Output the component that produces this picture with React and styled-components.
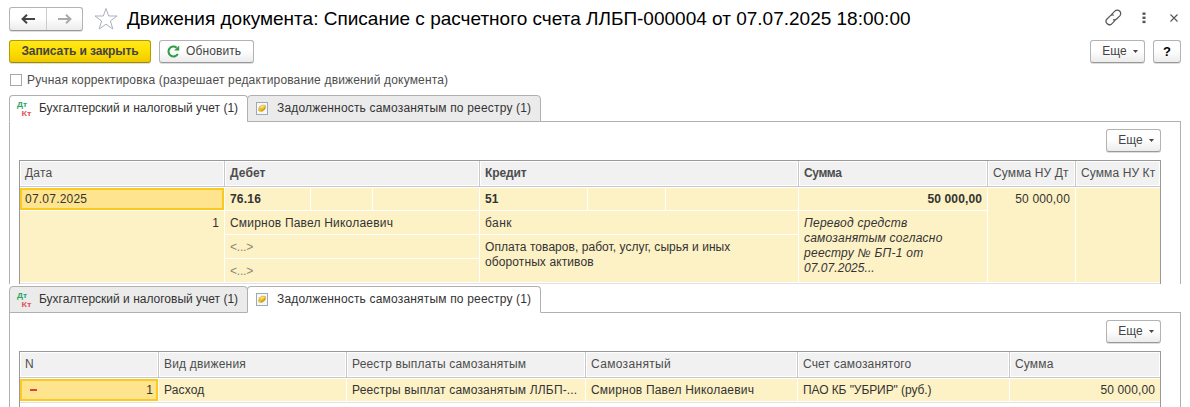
import React from 'react';
import styled, { createGlobalStyle, css } from 'styled-components';

const GlobalStyle = createGlobalStyle`
  * { box-sizing: border-box; }
  html, body { margin: 0; background: #fff; }
  body {
    font-family: "Liberation Sans", Arial, sans-serif;
    font-size: 12px;
    line-height: 15px;
    color: #333;
    overflow: hidden;
  }
`;

const Window = styled.main`
  width: 1190px;
  height: 407px;
  padding: 6px 9px 0;
  overflow: hidden;
  display: flex;
  flex-direction: column;
`;

const TitleBar = styled.header`
  height: 25px;
  display: flex;
  align-items: center;
`;

const Text = styled.span`
  white-space: nowrap;
  letter-spacing: ${(p) => p.$ls || 0}px;
`;

const raised = css`
  border: 1px solid #b3b3b3;
  border-bottom-color: #999;
  border-radius: 3px;
  background: linear-gradient(#fff 0%, #fff 45%, #ececec 100%);
  box-shadow: 0 1px 0 #dedede;
`;

const NavButtons = styled.div`
  ${raised}
  width: 74px;
  height: 24px;
  display: grid;
  grid-template-columns: 36px 36px;
`;

const NavButton = styled.button`
  border: 0;
  padding: 0;
  background: none;
  display: grid;
  place-items: center;
  & + & { border-left: 1px solid #ccc; }
`;

const Star = styled.svg`
  margin: 0 9px 0 11px;
  flex: none;
`;

const Title = styled.h1`
  margin: 0;
  flex: 1;
  font-size: 19px;
  line-height: 24px;
  font-weight: 400;
  color: #000;
  white-space: nowrap;
`;

const WindowTools = styled.div`
  width: 73px;
  display: flex;
  align-items: center;
  padding-bottom: 2px;
  margin-right: 3px;
`;

const Kebab = styled.svg`
  margin: 0 24px 0 20px;
`;

const CommandBar = styled.div`
  display: flex;
  gap: 8px;
  margin-top: 9px;
  height: 23px;
`;

const Button = styled.button`
  ${raised}
  width: ${(p) => p.$w}px;
  height: 23px;
  padding: 0 0 1px;
  display: flex;
  align-items: center;
  justify-content: center;
  gap: ${(p) => p.$gap || 0}px;
  font: 12px/15px "Liberation Sans", Arial, sans-serif;
  color: #444;
  ${(p) => p.$primary && css`
    border-color: #b39b00;
    border-bottom-color: #a08a00;
    background: linear-gradient(#ffe81f, #ffe000 45%, #edca00);
    font-weight: 700;
  `}
  ${(p) => p.$help && css`
    font-weight: 700;
    font-size: 13px;
    color: #000;
  `}
  ${(p) => p.$start && css`
    justify-content: flex-start;
    padding-left: 7px;
  `}
`;

const MoreText = styled(Text)`
  padding-left: 5px;
`;

const Spacer = styled.div`
  flex: 1;
  margin-right: -8px;
`;

const CheckRow = styled.label`
  height: 15px;
  margin: 10px 0 7px 1px;
  display: flex;
  align-items: center;
  gap: 5px;
  color: #4d4d4d;
`;

const CheckBox = styled.span`
  width: 12px;
  height: 12px;
  margin-bottom: 1px;
  border: 1px solid #a6a6a6;
  background: #fff;
`;

const Tabs = styled.div`
  display: flex;
  height: 27px;
  flex: none;
  margin-bottom: -1px;
  position: relative;
`;

const Tab = styled.div`
  width: ${(p) => p.$w}px;
  height: 27px;
  border: 1px solid #b0b0b0;
  border-radius: 4px 4px 0 0;
  border-bottom-color: ${(p) => (p.$active ? '#fff' : '#b0b0b0')};
  background: ${(p) => (p.$active ? '#fff' : '#ebebeb')};
  ${(p) => p.$joined && 'margin-left: -1px;'}
  display: flex;
  align-items: center;
  padding: 0 0 1px ${(p) => p.$pad}px;
  gap: ${(p) => p.$gap}px;
  color: #333;
`;

const Panel = styled.section`
  width: 1172px;
  height: ${(p) => p.$h}px;
  flex: none;
  border: 1px solid #b0b0b0;
  border-bottom: 0;
  padding: 7px 19px 0 9px;
  overflow: hidden;
`;

const PanelBar = styled.div`
  display: flex;
  justify-content: flex-end;
  height: 31px;
`;

const Table = styled.div`
  width: 1142px;
  height: 200px;
  border: 1px solid #999;
  border-bottom: 0;
`;

const HeadRow = styled.div`
  display: grid;
  grid-template-columns: ${(p) => p.$cols};
  column-gap: 1px;
  height: 26px;
  background: #c8c8c8;
  border-bottom: 1px solid #c8c8c8;
`;

const HeadCell = styled.div`
  background: #f1f1f1;
  border: 1px solid #fff;
  padding: 4px 0 0 4px;
  color: #4d4d4d;
  font-weight: ${(p) => (p.$bold ? 700 : 400)};
  overflow: hidden;
`;

const Body = styled.div`
  display: grid;
  grid-template-columns: ${(p) => p.$cols};
  grid-template-rows: ${(p) => p.$rows};
  gap: 1px;
  padding: 1px 0;
  border-bottom: 1px solid #e2e2e2;
`;

const Cell = styled.div`
  grid-column: ${(p) => p.$c};
  grid-row: ${(p) => p.$r};
  background: #fdf1c6;
  padding: ${(p) => (p.$detail ? 5 : 4)}px 5px 0;
  white-space: nowrap;
  overflow: hidden;
  text-align: ${(p) => (p.$right ? 'right' : 'left')};
  font-weight: ${(p) => (p.$bold ? 700 : 400)};
  font-style: ${(p) => (p.$italic ? 'italic' : 'normal')};
  ${(p) => p.$muted && 'color: #8a8678;'}
  ${(p) => p.$selected && css`
    background: #ffe48f;
    border: 2px solid #fcc91f;
    padding: 2px 3px 0;
  `}
`;

const SplitCell = styled.div`
  grid-column: ${(p) => p.$c};
  display: grid;
  grid-template-columns: ${(p) => p.$cols};
  gap: 1px;
`;

const MarkedCell = styled(Cell)`
  display: flex;
  justify-content: space-between;
`;

const Minus = styled.span`
  width: 7px;
  height: 2px;
  margin: 6px 0 0 5px;
  background: #e0413a;
`;

const Gap = styled.div`
  height: 2px;
  flex: none;
`;

const Arrow = ({ right }) => (
  <svg width="14" height="12" viewBox="0 0 14 12" fill="none" stroke={right ? '#aaa' : '#444'} strokeWidth="2">
    <path d={right ? 'M0 6H12M8 1.8L12.4 6L8 10.2' : 'M14 6H2M6 1.8L1.6 6L6 10.2'} />
  </svg>
);

const More = () => (
  <Button $w={55} $gap={6}>
    <MoreText>Еще</MoreText>
    <svg width="5" height="3" viewBox="0 0 5 3"><path d="M0 0H5L2.5 3Z" fill="#444" /></svg>
  </Button>
);

const Glyph = styled.text`
  font: 700 8px "Liberation Sans", Arial, sans-serif;
`;

const DtKt = () => (
  <svg width="17" height="17" viewBox="0 0 17 17">
    <Glyph x="1" y="7" fill="#2aa566" textLength="10" lengthAdjust="spacingAndGlyphs">Дт</Glyph>
    <Glyph x="5.5" y="15.5" fill="#e25555" textLength="10" lengthAdjust="spacingAndGlyphs">Кт</Glyph>
  </svg>
);

const CoinIcon = () => (
  <svg width="12" height="13" viewBox="0 0 12 13">
    <rect x="0.5" y="0.5" width="11" height="12" fill="#f5f8fb" stroke="#9ba9ba" />
    <path d="M3 4.6L6.2 2.7L9.8 3L9.5 7.2L6.5 9.8L3.5 9.8L2 8.2Z" fill="#e5bd35" />
    <path d="M4 5L6.6 3.6L8.6 4L7 5.6L4.6 6.2Z" fill="#f8e27d" />
    <path d="M5 8.8L8 7.5L9.4 5" stroke="#c3951c" fill="none" />
  </svg>
);

const TabStrip = ({ active }) => (
  <Tabs>
    <Tab $w={239} $pad={6} $gap={6} $active={active === 0}>
      <DtKt /><Text>Бухгалтерский и налоговый учет (1)</Text>
    </Tab>
    <Tab $w={294} $pad={8} $gap={9} $joined $active={active === 1}>
      <CoinIcon /><Text $ls={0.18}>Задолженность самозанятым по реестру (1)</Text>
    </Tab>
  </Tabs>
);

const COLS1 = '204px 254px 318px 188px 87px 84px';
const COLS2 = '138px 187px 238px 211px 211px 150px';

export default function App() {
  return (
    <Window>
      <GlobalStyle />
      <TitleBar>
        <NavButtons>
          <NavButton><Arrow /></NavButton>
          <NavButton><Arrow right /></NavButton>
        </NavButtons>
        <Star width="24" height="24" viewBox="0 0 24 24" fill="none" stroke="#a9b0b8" strokeWidth="1">
          <path d="M12 1.5L14.7 9H23L16.4 14L18.8 22L12 17.2L5.2 22L7.6 14L1 9H9.3Z" />
        </Star>
        <Title>Движения документа: Списание с расчетного счета ЛЛБП-000004 от 07.07.2025 18:00:00</Title>
        <WindowTools>
          <svg width="17" height="17" viewBox="0 0 17 17" fill="none" stroke="#555" strokeWidth="1.2">
            <path d="M6.4 5.6L9.8 2.2A3.2 3.2 0 0 1 14.8 6.8L11.6 10A3.2 3.2 0 0 1 8 10.6M10.4 11.2L7 14.6A3.2 3.2 0 0 1 2 10L5.2 6.8A3.2 3.2 0 0 1 8.8 6.2" />
          </svg>
          <Kebab width="4" height="12" viewBox="0 0 4 12" fill="#555">
            <rect x="0.5" y="0.5" width="3" height="2.4" /><rect x="0.5" y="4.6" width="3" height="2.4" /><rect x="0.5" y="8.7" width="3" height="2.4" />
          </Kebab>
          <svg width="8" height="8" viewBox="0 0 8 8" stroke="#555" strokeWidth="1.1"><path d="M0.5 0.5L7.5 7.5M7.5 0.5L0.5 7.5" /></svg>
        </WindowTools>
      </TitleBar>

      <CommandBar>
        <Button $w={142} $primary><Text $ls={-0.1}>Записать и закрыть</Text></Button>
        <Button $w={95} $gap={6} $start>
          <svg width="13" height="13" viewBox="0 0 13 13">
            <path d="M10.8 9A5 5 0 1 1 9.6 2.6" fill="none" stroke="#2f9e44" strokeWidth="2.1" />
            <path d="M12.2 0.5V5.6H7.1Z" fill="#2f9e44" />
          </svg>
          <Text $ls={0.1}>Обновить</Text>
        </Button>
        <Spacer />
        <More />
        <Button $w={28} $help>?</Button>
      </CommandBar>

      <CheckRow>
        <CheckBox />
        <Text $ls={0.165}>Ручная корректировка (разрешает редактирование движений документа)</Text>
      </CheckRow>

      <TabStrip active={0} />
      <Panel $h={163}>
        <PanelBar><More /></PanelBar>
        <Table>
          <HeadRow $cols={COLS1}>
            <HeadCell><Text $ls={0.2}>Дата</Text></HeadCell>
            <HeadCell $bold><Text $ls={0.1}>Дебет</Text></HeadCell>
            <HeadCell $bold><Text $ls={-0.1}>Кредит</Text></HeadCell>
            <HeadCell $bold><Text $ls={-0.4}>Сумма</Text></HeadCell>
            <HeadCell><Text $ls={0.13}>Сумма НУ Дт</Text></HeadCell>
            <HeadCell><Text $ls={0.1}>Сумма НУ Кт</Text></HeadCell>
          </HeadRow>
          <Body $cols={COLS1} $rows="22px 23px 23px 23px">
            <Cell $c={1} $r={1} $selected><Text $ls={0.22}>07.07.2025</Text></Cell>
            <Cell $c={1} $r="2 / 5" $detail $right>1</Cell>
            <SplitCell $c={2} $cols="85px 61px 106px">
              <Cell $bold><Text $ls={0.2}>76.16</Text></Cell><Cell /><Cell />
            </SplitCell>
            <Cell $c={2} $r={2} $detail><Text $ls={0.2}>Смирнов Павел Николаевич</Text></Cell>
            <Cell $c={2} $r={3} $detail $muted><Text $ls={-0.2}>&lt;...&gt;</Text></Cell>
            <Cell $c={2} $r={4} $detail $muted><Text $ls={-0.2}>&lt;...&gt;</Text></Cell>
            <SplitCell $c={3} $cols="107px 77px 132px">
              <Cell $bold>51</Cell><Cell /><Cell />
            </SplitCell>
            <Cell $c={3} $r={2} $detail><Text $ls={0.45}>банк</Text></Cell>
            <Cell $c={3} $r="3 / 5" $detail>
              <Text $ls={0.05}>Оплата товаров, работ, услуг, сырья и иных</Text><br />
              <Text $ls={0.1}>оборотных активов</Text>
            </Cell>
            <Cell $c={4} $r={1} $right $bold><Text $ls={0.12}>50 000,00</Text></Cell>
            <Cell $c={4} $r="2 / 5" $detail $italic>
              <Text $ls={0.27}>Перевод средств</Text><br />
              <Text $ls={0.22}>самозанятым согласно</Text><br />
              <Text $ls={0.27}>реестру № БП-1 от</Text><br />
              <Text $ls={0.05}>07.07.2025...</Text>
            </Cell>
            <Cell $c={5} $r="1 / 5" $right><Text $ls={0.15}>50 000,00</Text></Cell>
            <Cell $c={6} $r="1 / 5" />
          </Body>
        </Table>
      </Panel>

      <Gap />
      <TabStrip active={1} />
      <Panel $h={95}>
        <PanelBar><More /></PanelBar>
        <Table>
          <HeadRow $cols={COLS2}>
            <HeadCell>N</HeadCell>
            <HeadCell><Text $ls={0.2}>Вид движения</Text></HeadCell>
            <HeadCell><Text $ls={0.17}>Реестр выплаты самозанятым</Text></HeadCell>
            <HeadCell><Text $ls={0.33}>Самозанятый</Text></HeadCell>
            <HeadCell><Text $ls={0.17}>Счет самозанятого</Text></HeadCell>
            <HeadCell><Text $ls={0.15}>Сумма</Text></HeadCell>
          </HeadRow>
          <Body $cols={COLS2} $rows="22px">
            <MarkedCell $selected><Minus />1</MarkedCell>
            <Cell><Text $ls={0.15}>Расход</Text></Cell>
            <Cell><Text $ls={0.17}>Реестры выплат самозанятым ЛЛБП-...</Text></Cell>
            <Cell><Text $ls={0.2}>Смирнов Павел Николаевич</Text></Cell>
            <Cell><Text $ls={-0.08}>ПАО КБ "УБРИР" (руб.)</Text></Cell>
            <Cell $right><Text $ls={0.12}>50 000,00</Text></Cell>
          </Body>
        </Table>
      </Panel>
    </Window>
  );
}
